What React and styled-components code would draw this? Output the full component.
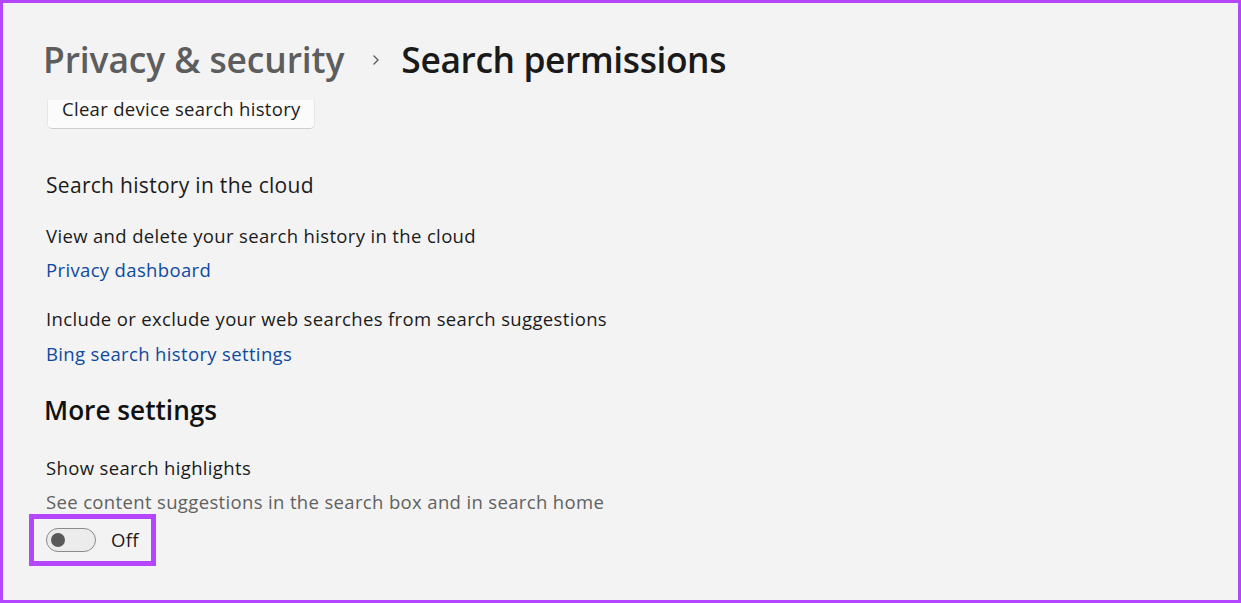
import React from "react";
import styled, { createGlobalStyle } from "styled-components";

const Global = createGlobalStyle`
  html, body { margin: 0; padding: 0; background: #f3f3f3; }
  * { box-sizing: border-box; }
`;

const Frame = styled.div`
  width: 1241px;
  height: 603px;
  border: 3px solid #b546ff;
  background: #f3f3f3;
  display: flex;
  flex-direction: column;
  font-family: "Open Sans", "Noto Sans", sans-serif;
  color: #1b1b1b;
  overflow: hidden;
`;

const Header = styled.header`
  height: 97px;
  flex: none;
  display: flex;
  align-items: center;
  padding: 14px 0 0 40px;
`;

const Crumb = styled.h1`
  margin: 0;
  font-size: 35.4px;
  font-weight: 600;
  letter-spacing: ${(p) => (p.$current ? "-0.4px" : "-0.1px")};
  color: ${(p) => (p.$current ? "#1a1a1a" : "#5d5d5d")};
`;

const Chevron = styled.svg`
  width: 12px;
  height: 12px;
  margin: 2px 19px 0 26px;
`;

const Viewport = styled.div`
  flex: 1;
  overflow: hidden;
`;

const Content = styled.div`
  display: flex;
  flex-direction: column;
  align-items: flex-start;
  padding-left: 43px;
  margin-top: -11px;
`;

const Button = styled.button`
  height: 40px;
  padding: 0 13px 0 14px;
  margin-left: 1px;
  background: #fbfbfb;
  border: 1px solid #e6e6e6;
  border-bottom-color: #cfcfcf;
  border-radius: 5px;
  font-family: inherit;
  font-size: 18.5px;
  letter-spacing: 0.3px;
  line-height: 36px;
  color: #1b1b1b;
`;

const Text = styled.div`
  font-size: ${(p) => p.$size || 18.5}px;
  line-height: ${(p) => p.$lh || 24}px;
  letter-spacing: ${(p) => (p.$ls !== undefined ? p.$ls : 0.35)}px;
  font-weight: ${(p) => p.$weight || 400};
  color: ${(p) => p.$color || "#1b1b1b"};
  margin-top: ${(p) => p.$gap || 0}px;
  margin-left: ${(p) => p.$indent || 0}px;
`;

const Link = styled.a`
  display: block;
  font-size: 18.5px;
  line-height: 24px;
  letter-spacing: 0.35px;
  color: #0d4a9e;
  text-decoration: none;
  margin-top: ${(p) => p.$gap || 0}px;
`;

const Highlight = styled.div`
  margin-left: -17px;
  border: 5px solid #b546ff;
  padding: 9px 12px;
  display: flex;
  align-items: center;
  gap: 15px;
`;

const Toggle = styled.div`
  width: 50px;
  height: 24px;
  border: 1px solid #8a8a8a;
  border-radius: 12px;
  background: #ececec;
  display: flex;
  align-items: center;
  padding-left: 4px;
`;

const Knob = styled.span`
  width: 14px;
  height: 14px;
  border-radius: 50%;
  background: #5a5a5a;
`;

const StateLabel = styled.span`
  font-size: 18.5px;
  line-height: 24px;
  letter-spacing: 0.35px;
  color: #1b1b1b;
`;

export default function App() {
  return (
    <>
      <Global />
      <Frame>
        <Header>
          <Crumb>Privacy &amp; security</Crumb>
          <Chevron viewBox="0 0 12 12">
            <path d="M4 2 L8 6 L4 10" fill="none" stroke="#5d5d5d" strokeWidth="1.4" strokeLinecap="round" strokeLinejoin="round" />
          </Chevron>
          <Crumb $current>Search permissions</Crumb>
        </Header>
        <Viewport>
          <Content>
            <Button>Clear device search history</Button>
            <Text $size={21} $lh={28} $ls={0.3} $gap={42}>Search history in the cloud</Text>
            <Text $gap={25}>View and delete your search history in the cloud</Text>
            <Link href="#" $gap={10}>Privacy dashboard</Link>
            <Text $gap={25}>Include or exclude your web searches from search suggestions</Text>
            <Link href="#" $gap={11}>Bing search history settings</Link>
            <Text $size={26.2} $lh={34} $ls={0} $weight={600} $gap={27} $indent={-2} $color="#111">More settings</Text>
            <Text $gap={29}>Show search highlights</Text>
            <Text $gap={10} $color="#616161">See content suggestions in the search box and in search home</Text>
            <Highlight>
              <Toggle><Knob /></Toggle>
              <StateLabel>Off</StateLabel>
            </Highlight>
          </Content>
        </Viewport>
      </Frame>
    </>
  );
}
